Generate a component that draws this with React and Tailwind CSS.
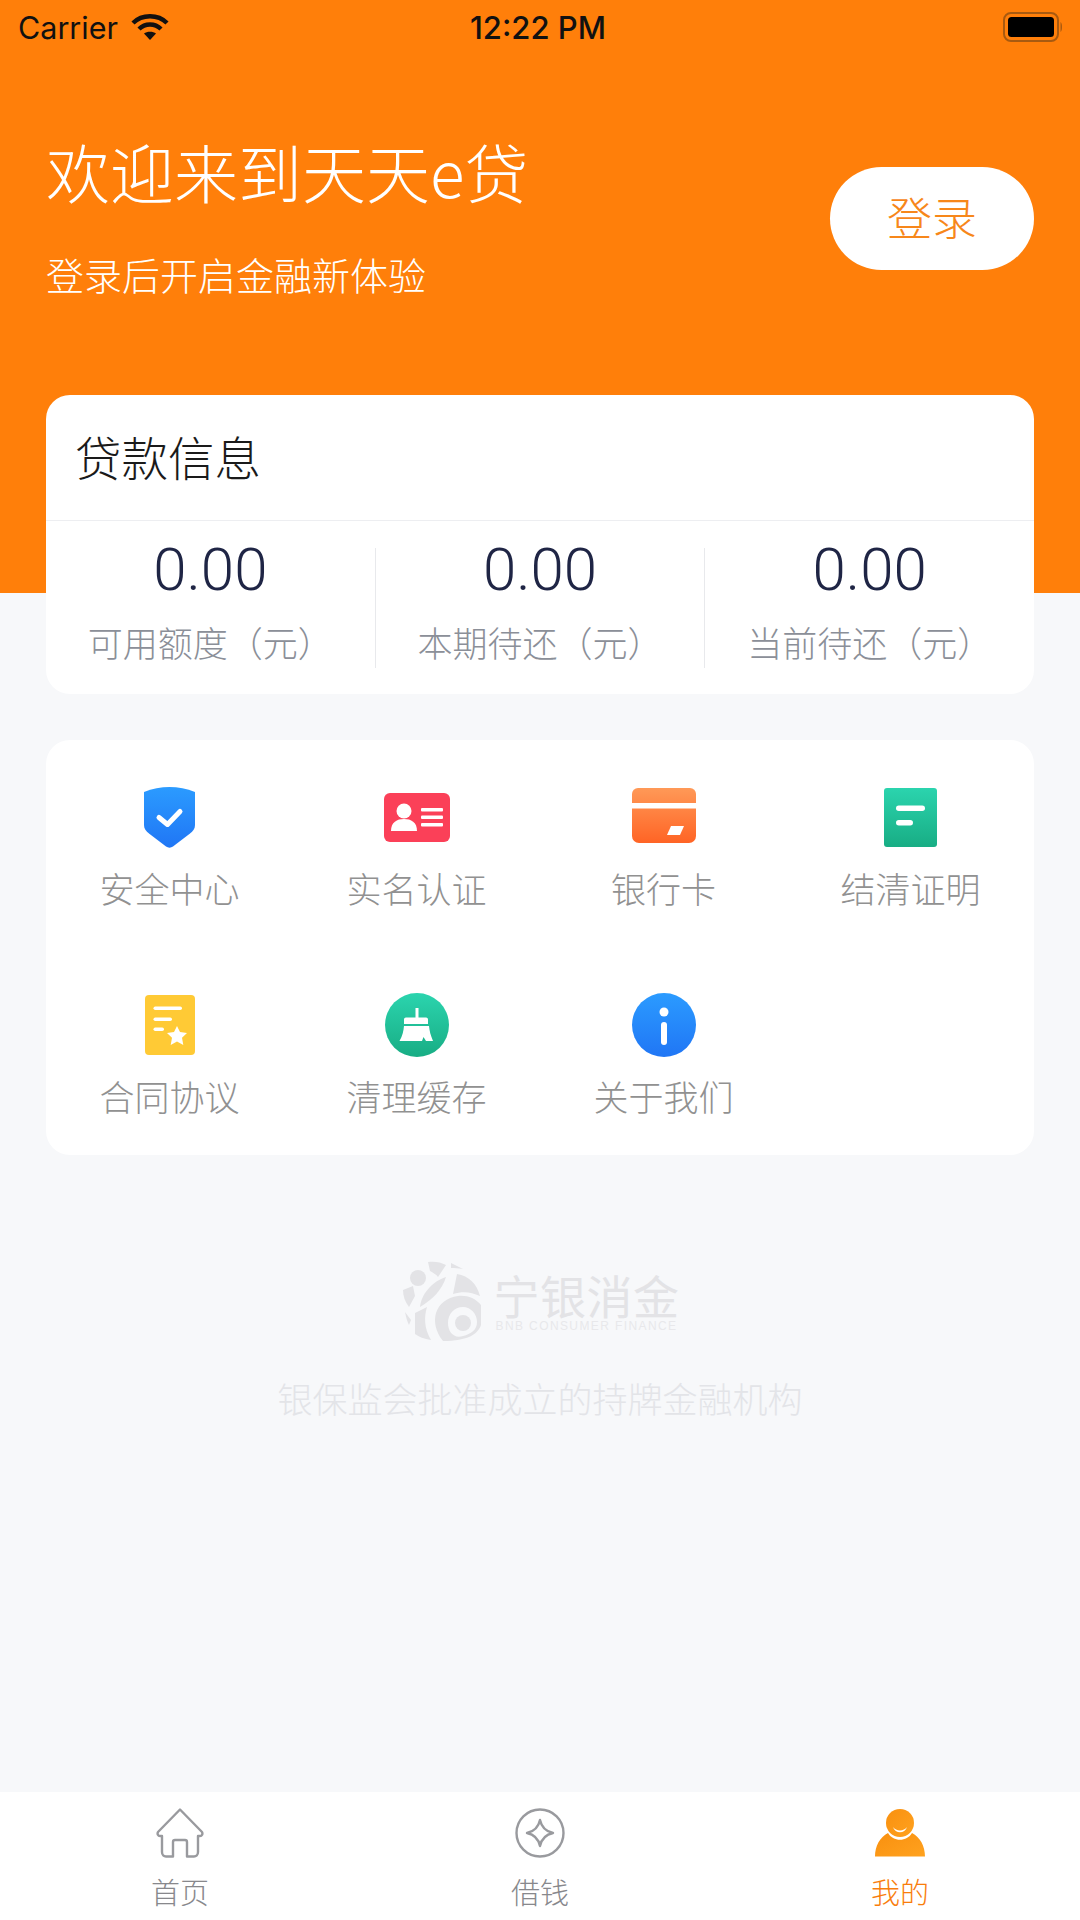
import React from "react";

const CJK = "font-['Noto_Sans_CJK_SC',sans-serif]";

function Wifi() {
  return (
    <svg width="38" height="28" viewBox="0 0 38 28" fill="none" stroke="#111" strokeWidth="4.4">
      <path d="M2 10 C11 1 27 1 36 10" />
      <path d="M8 16 C14 10 24 10 30 16" />
      <path d="M19 27 L13 20.5 C16 18 22 18 25 20.5 Z" fill="#111" stroke="none" />
    </svg>
  );
}

function Battery() {
  return (
    <svg width="60" height="30" viewBox="0 0 60 30">
      <rect x="1" y="1" width="54" height="28" rx="7" fill="none" stroke="#a85a10" strokeWidth="2" />
      <rect x="5" y="5" width="46" height="20" rx="3.5" fill="#000" />
      <path d="M57.500 10 C59.500 11 59.500 19 57.500 20 Z" fill="#a85a10" />
    </svg>
  );
}

function Shield() {
  return (
    <svg width="51" height="61" viewBox="0 0 51 61">
      <defs>
        <linearGradient id="gb" x1="0" y1="0" x2="0" y2="1">
          <stop offset="0" stopColor="#2b9bff" />
          <stop offset="1" stopColor="#2076f5" />
        </linearGradient>
      </defs>
      <path d="M0 5 C8 1.500 17 0 25.500 0 C34 0 43 1.500 51 5 V38 C51 42 49 44 46 46.500 L29 59.500 C27 61 24 61 22 59.500 L5 46.500 C2 44 0 42 0 38 Z" fill="url(#gb)" />
      <path d="M15 30.500 L23.500 37.500 L36 24.500" fill="none" stroke="#fff" strokeWidth="5" strokeLinecap="round" strokeLinejoin="round" />
    </svg>
  );
}

function IdCard() {
  return (
    <svg width="66" height="49" viewBox="0 0 66 49">
      <rect width="66" height="49" rx="6" fill="#fb4058" />
      <circle cx="20" cy="18" r="7.500" fill="#fff" />
      <path d="M7 38 C7 29 13 26 20 26 C27 26 33 29 33 38 Z" fill="#fff" />
      <rect x="37" y="15" width="22" height="3.500" rx="1" fill="#fff" />
      <rect x="37" y="22.500" width="22" height="3.500" rx="1" fill="#fff" />
      <rect x="37" y="30" width="22" height="3.500" rx="1" fill="#fff" />
    </svg>
  );
}

function BankCard() {
  return (
    <svg width="64" height="59" viewBox="0 0 64 59">
      <defs>
        <linearGradient id="go" x1="0" y1="0" x2="0" y2="1">
          <stop offset="0" stopColor="#ff9957" />
          <stop offset="1" stopColor="#ff6425" />
        </linearGradient>
      </defs>
      <path d="M6 0 H58 A6 6 0 0 1 64 6 V48 A7 7 0 0 1 57 55 H7 A7 7 0 0 1 0 48 V6 A6 6 0 0 1 6 0 Z" fill="url(#go)" />
      <rect y="15" width="64" height="5.500" fill="#fff" />
      <path d="M39 38 H52 L48 47 H35 Z" fill="#fff" />
    </svg>
  );
}

function GreenDoc() {
  return (
    <svg width="53" height="59" viewBox="0 0 53 59">
      <defs>
        <linearGradient id="gg" x1="0" y1="0" x2="0" y2="1">
          <stop offset="0" stopColor="#2bd4ae" />
          <stop offset="1" stopColor="#18ad84" />
        </linearGradient>
      </defs>
      <rect width="53" height="59" rx="3" fill="url(#gg)" />
      <rect x="12" y="17.500" width="29" height="5.500" rx="2.750" fill="#fff" />
      <rect x="12" y="32" width="17" height="5.500" rx="2.750" fill="#fff" />
    </svg>
  );
}

function YellowDoc() {
  return (
    <svg width="50" height="60" viewBox="0 0 50 60">
      <rect width="50" height="60" rx="4" fill="#ffca35" />
      <rect x="8.500" y="11.500" width="28.500" height="3.500" rx="1.750" fill="#fff" />
      <rect x="8.500" y="22.500" width="18.500" height="3.500" rx="1.750" fill="#fff" />
      <rect x="8.500" y="32.500" width="10.500" height="3.500" rx="1.750" fill="#fff" />
      <path d="M32 31 L35 37 L42 38 L37 42.800 L38.300 50 L32 46.500 L25.700 50 L27 42.800 L22 38 L29 37 Z" fill="#fff" />
    </svg>
  );
}

function Broom() {
  return (
    <svg width="64" height="64" viewBox="0 0 64 64">
      <defs>
        <linearGradient id="gg2" x1="0" y1="0" x2="0" y2="1">
          <stop offset="0" stopColor="#2bd4ae" />
          <stop offset="1" stopColor="#18ad84" />
        </linearGradient>
      </defs>
      <circle cx="32" cy="32" r="32" fill="url(#gg2)" />
      <path d="M30.500 15 H33.500 V24.500 H41 C42.500 24.500 43 25.500 43 26.500 V31 H19 V26.500 C19 25.500 19.500 24.500 21 24.500 H30.500 Z" fill="#fff" />
      <path d="M19 33 H44 C44.500 38 45.500 42 48 48 H41 L38.500 44 L37 48 H14.500 C17.500 43 18.500 38 19 33 Z" fill="#fff" />
    </svg>
  );
}

function Info() {
  return (
    <svg width="64" height="64" viewBox="0 0 64 64">
      <defs>
        <linearGradient id="gb2" x1="0" y1="0" x2="0" y2="1">
          <stop offset="0" stopColor="#2b9bff" />
          <stop offset="1" stopColor="#2076f5" />
        </linearGradient>
      </defs>
      <circle cx="32" cy="32" r="32" fill="url(#gb2)" />
      <circle cx="32" cy="19" r="4.500" fill="#fff" />
      <rect x="29" y="29" width="6" height="23" rx="3" fill="#fff" />
    </svg>
  );
}

function LogoMark() {
  return (
    <svg width="80" height="82" viewBox="0 0 80 82" fill="#e3e3e6">
      <circle cx="17" cy="18" r="8" />
      <path d="M27 2 C33 1 40 2 45 5 L37 17 C35 14 32 13 29 11 Z" />
      <path d="M50 3 L62 9 C57 8 54 8 50 8 Z" />
      <path d="M45 17 C41 30 32 39 19 47 C20 35 30 22 45 17 Z" />
      <path d="M2 30 L12 26 L14 36 L8 47 C4 42 2 36 2 30 Z" />
      <path d="M4 52 L10 60 L8 65 C6 61 5 57 4 52 Z" />
      <path d="M14 53 L26 47 C23 57 23 68 30 80 C23 79 18 77 14 74 Z" />
      <path d="M56 14 C68 16 76 24 79 36 C70 32 62 31 52 34 Z" />
      <path d="M42 81 C27 62 34 39 57 36 C66 35 74 38 80 45 L80 65 C77 74 67 81 42 81 Z M62 47 C53 47 47 54 47 63 C47 72 53 79 62 76 C70 74 76 70 76 62 C76 54 70 47 62 47 Z" />
      <circle cx="62" cy="63" r="8" />
    </svg>
  );
}

function HomeIcon() {
  return (
    <svg width="48" height="50" viewBox="0 0 48 50" fill="none" stroke="#999a9e" strokeWidth="2.400" strokeLinejoin="round">
      <path d="M24 1.500 L46 24 C47 26 46 28 44 28 H42 V44 C42 47 40 48.500 38 48.500 H31 V34 C31 33 30 32 29 32 H19 C18 32 17 33 17 34 V48.500 H10 C8 48.500 6 47 6 44 V28 H4 C2 28 1 26 2 24 Z" />
    </svg>
  );
}

function StarIcon() {
  return (
    <svg width="50" height="50" viewBox="0 0 50 50" fill="none" stroke="#999a9e" strokeWidth="2.400" strokeLinejoin="round">
      <circle cx="25" cy="25" r="23.500" />
      <path d="M25 12 C26.500 19 31 23.500 38 25 C31 26.500 26.500 31 25 38 C23.500 31 19 26.500 12 25 C19 23.500 23.500 19 25 12 Z" />
    </svg>
  );
}

function MeIcon() {
  return (
    <svg width="50" height="48" viewBox="0 0 50 48">
      <defs>
        <linearGradient id="gm" x1="0" y1="0" x2="1" y2="1">
          <stop offset="0" stopColor="#f9900f" />
          <stop offset="1" stopColor="#ffa21f" />
        </linearGradient>
      </defs>
      <path d="M0 47.500 C0 37 5 28 13 24 C18 33 32 33 37 24 C45 28 50 37 50 47.500 Z" fill="url(#gm)" />
      <circle cx="25" cy="14" r="14" fill="url(#gm)" />
      <path d="M18 18 C21 22.500 29 22.500 32 18 C30 25 20 25 18 18 Z" fill="#fff" />
    </svg>
  );
}

function Stat({ label, border }) {
  return (
    <div className={`flex-1 flex flex-col items-center h-[120px] ${border ? "border-l border-[#e8e9ec]" : ""}`}>
      <div className="text-[60px] leading-[54px] font-light text-[#1f2545] font-['Roboto',sans-serif] -mt-[5px]">0.00</div>
      <div className={`text-[35px] leading-[48px] text-[#8b8f98] font-light mt-[21px] whitespace-nowrap ${CJK}`}>{label}</div>
    </div>
  );
}

function Tile({ icon, label }) {
  return (
    <div className="flex flex-col items-center">
      <div className="h-[64px] flex items-center justify-center">{icon}</div>
      <div className={`mt-[15px] text-[35px] leading-[48px] text-[#919191] font-light whitespace-nowrap ${CJK}`}>{label}</div>
    </div>
  );
}

function Tab({ icon, label, active }) {
  return (
    <div className="flex-1 flex flex-col items-center pt-[15px]">
      <div className="h-[52px] flex items-center justify-center">{icon}</div>
      <div className={`mt-[12px] text-[29px] leading-[40px] font-light ${active ? "text-[#f97d0b]" : "text-[#88888c]"} ${CJK}`}>{label}</div>
    </div>
  );
}

export default function App() {
  return (
    <div className={`w-[1080px] h-[1920px] flex flex-col bg-[#f7f8fa] overflow-hidden ${CJK}`}>
      <div className="h-[593px] shrink-0 bg-[#ff7f0a]">
        <div className="h-[54px] flex items-center justify-between pl-[18px] pr-[17px] relative">
          <div className="flex items-center gap-[13px]">
            <span className="mt-[2px] text-[30.500px] leading-[36px] text-[#111] font-['Inter',sans-serif]">Carrier</span>
            <Wifi />
          </div>
          <span className="absolute left-[470px] top-[10px] text-[31px] leading-[36px] font-medium text-[#111] font-['Inter',sans-serif]">12:22 PM</span>
          <Battery />
        </div>
        <div className="flex justify-between pl-[46px] pr-[46px] pt-[78px]">
          <div>
            <div className="text-[64px] leading-[76px] text-white font-light whitespace-nowrap">欢迎来到天天e贷</div>
            <div className="mt-[38px] text-[38px] leading-[56px] text-white font-light whitespace-nowrap">登录后开启金融新体验</div>
          </div>
          <div className="w-[204px] h-[103px] mt-[35px] pb-[4px] rounded-[52px] bg-white flex items-center justify-center text-[45px] text-[#f7871a] font-light">登录</div>
        </div>
      </div>

      <div className="-mt-[198px] mx-[46px] h-[299px] shrink-0 rounded-[24px] bg-white flex flex-col">
        <div className="h-[126px] shrink-0 border-b border-[#edeef1] pl-[29px] pb-[4px] flex items-center">
          <span className="text-[46.500px] text-[#1a1a1a] font-light">贷款信息</span>
        </div>
        <div className="flex pt-[27px]">
          <Stat label="可用额度（元）" />
          <Stat label="本期待还（元）" border />
          <Stat label="当前待还（元）" border />
        </div>
      </div>

      <div className="mt-[46px] mx-[46px] h-[415px] shrink-0 rounded-[24px] bg-white grid grid-cols-4 content-start gap-y-[81px] pt-[45px]">
        <Tile icon={<Shield />} label="安全中心" />
        <Tile icon={<IdCard />} label="实名认证" />
        <Tile icon={<BankCard />} label="银行卡" />
        <Tile icon={<GreenDoc />} label="结清证明" />
        <Tile icon={<YellowDoc />} label="合同协议" />
        <Tile icon={<Broom />} label="清理缓存" />
        <Tile icon={<Info />} label="关于我们" />
      </div>

      <div className="flex-1 flex flex-col items-center pt-[105px]">
        <div className="flex items-center gap-[13px]">
          <LogoMark />
          <div className="flex flex-col items-center -mt-[3px]">
            <div className="text-[46px] leading-[52px] text-[#e3e3e6] font-normal tracking-[0.5px]">宁银消金</div>
            <div className="text-[12px] leading-[12px] text-[#e8e8eb] font-['Liberation_Sans',sans-serif] tracking-[1.4px] whitespace-nowrap">BNB CONSUMER FINANCE</div>
          </div>
        </div>
        <div className="mt-[32px] text-[35px] leading-[48px] text-[#e3e4e8] font-light whitespace-nowrap">银保监会批准成立的持牌金融机构</div>
      </div>

      <div className="h-[128px] shrink-0 bg-white flex">
        <Tab icon={<HomeIcon />} label="首页" />
        <Tab icon={<StarIcon />} label="借钱" />
        <Tab icon={<MeIcon />} label="我的" active />
      </div>
    </div>
  );
}
